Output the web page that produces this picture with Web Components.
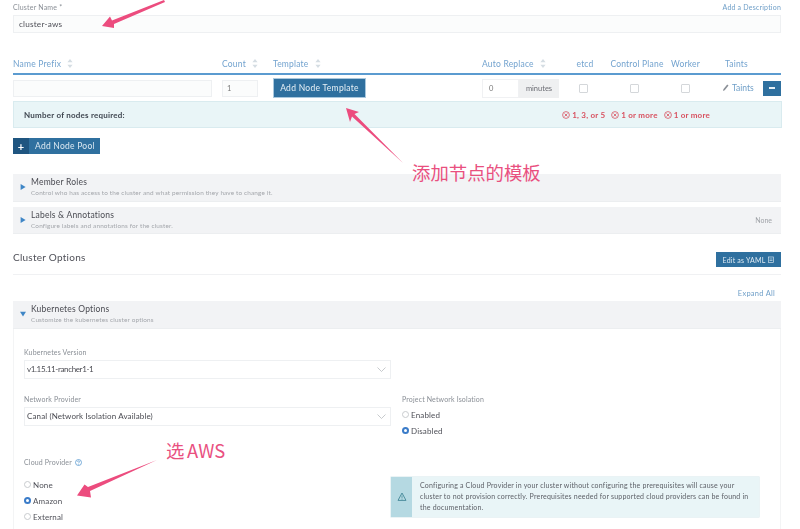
<!DOCTYPE html>
<html lang="en">
<head>
<meta charset="utf-8">
<title>Add Cluster</title>
<style>
    html, body { margin: 0; height: 529px; overflow: hidden; background: #fff; }
    body { font-family: Lato, "Noto Sans CJK SC", sans-serif; color: #4a4b52; position: relative; }
</style>
</head>
<body>
<cluster-page></cluster-page>
<arrow-notes></arrow-notes>

<script>
const sortIcon = `<svg width="6" height="9" viewBox="0 0 6 9" style="margin-left:4px;vertical-align:-1px"><path d="M3 0l2.6 3.2H.4zM3 9L.4 5.8h5.2z" fill="#d5dde3"/></svg>`;

class NameField extends HTMLElement {
    connectedCallback() {
        this.attachShadow({ mode: 'open' }).innerHTML = `
            <style>
                :host { display: block; }
                .top { display: flex; justify-content: space-between; align-items: center; height: 15px; padding-bottom: 1px; font-size: 7px; letter-spacing: .2px; box-sizing: border-box; }
                .top span { color: #8a8f96; }
                .top a { color: #6f9fc8; }
                .box { height: 18px; border: 1px solid #eef0f2; background: #fbfcfc; box-sizing: border-box; padding-left: 5px; display: flex; align-items: center; font-size: 8.2px; color: #4f5058; letter-spacing: .2px; }
            </style>
            <div class="top"><span>Cluster Name *</span><a>Add a Description</a></div>
            <div class="box">cluster-aws</div>`;
    }
}

class NodePool extends HTMLElement {
    connectedCallback() {
        this.attachShadow({ mode: 'open' }).innerHTML = `
            <style>
                :host { display: block; margin-top: 21px; }
                .grid { display: grid; grid-template-columns: 209px 51px 209px 82px 50px 52px 37px 1fr; }
                .head { height: 21px; box-sizing: border-box; border-bottom: 2px solid #5b9bd0; align-items: center; font-size: 8.5px; color: #73a3cf; letter-spacing: .2px; }
                .head div { white-space: nowrap; }
                .c { text-align: center; }
                .row { height: 26px; align-items: center; }
                .input { height: 17px; border: 1px solid #eef0f2; background: #fbfcfc; box-sizing: border-box; font-size: 7.5px; color: #777; padding-left: 4px; display: flex; align-items: center; }
                .add { width: 93px; height: 20px; box-sizing: border-box; border: 1px solid #a9c8de; background: #2f709f; color: #e6f0f6; font-size: 8.5px; letter-spacing: .3px; display: flex; align-items: center; justify-content: center; }
                .auto { display: flex; height: 19px; width: 77px; font-size: 7.5px; }
                .auto b { width: 37px; font-weight: 400; color: #777; padding-left: 6px; box-sizing: border-box; border: 1px solid #f0f1f3; display: flex; align-items: center; }
                .auto i { width: 40px; font-style: normal; color: #6c6d74; background: #eff0f1; display: flex; align-items: center; justify-content: center; }
                .chk { width: 7px; height: 7px; border: 1px solid #d4d7da; border-radius: 1px; margin: auto; }
                .taints { display: flex; justify-content: space-between; align-items: center; padding-left: 19px; font-size: 8.5px; color: #6f9fc8; }
                .taints span { display: flex; align-items: center; gap: 3px; }
                .minus { width: 18px; height: 15px; background: #2f709f; display: flex; align-items: center; justify-content: center; }
                .minus::after { content: ""; width: 6px; height: 1.5px; background: #e8f1f6; }
                .need { display: flex; align-items: center; height: 27px; width: 769px; box-sizing: border-box; border: 1px solid #d9ebef; background: #e9f5f7; padding-left: 10px; font-size: 8px; font-weight: 700; color: #3f4650; letter-spacing: .22px; }
                .need p { margin: 0 0 0 auto; padding-right: 71px; display: flex; gap: 6px; color: #d8505f; }
                .need span { display: flex; align-items: center; gap: 2px; }
                .pool { margin-top: 10px; display: flex; width: fit-content; height: 16px; background: #2f709f; color: #dce9f2; font-size: 8.5px; letter-spacing: .25px; align-items: center; }
                .pool b { width: 16px; height: 100%; background: #1f5580; color: #fff; display: flex; align-items: center; justify-content: center; font-size: 11px; margin-right: 6px; }
                .pool span { padding-right: 5px; }
            </style>
            <div class="grid head">
                <div>Name Prefix ${sortIcon}</div>
                <div>Count ${sortIcon}</div>
                <div>Template ${sortIcon}</div>
                <div>Auto Replace ${sortIcon}</div>
                <div class="c" style="margin-left:-8px">etcd</div>
                <div class="c" style="margin-left:-6px">Control Plane</div>
                <div class="c" style="margin-left:2px">Worker</div>
                <div class="c" style="padding-right:11px">Taints</div>
            </div>
            <div class="grid row">
                <div class="input" style="width:199px"></div>
                <div class="input" style="width:36px">1</div>
                <div class="add">Add Node Template</div>
                <div class="auto"><b>0</b><i>minutes</i></div>
                <div class="chk" style="margin-left:15px"></div>
                <div class="chk" style="margin-left:16px"></div>
                <div class="chk" style="margin-left:15px"></div>
                <div class="taints"><span><svg width="7" height="8" viewBox="0 0 7 8"><path d="M5.2.5l1.3 1.1-3.8 4.6-1.7.9.4-1.9z" fill="#8a8f96"/></svg>Taints</span><div class="minus"></div></div>
            </div>
            <div class="need">Number of nodes required:<p>
                <span><x-cross></x-cross>1, 3, or 5</span>
                <span><x-cross></x-cross>1 or more</span>
                <span><x-cross></x-cross>1 or more</span></p></div>
            <div class="pool"><b>+</b><span>Add Node Pool</span></div>`;
    }
}

class XCross extends HTMLElement {
    connectedCallback() {
        this.attachShadow({ mode: 'open' }).innerHTML = `
            <style>:host { display: inline-flex; }</style>
            <svg width="8" height="8" viewBox="0 0 8 8" fill="none" stroke="#d8505f" stroke-width=".8"><circle cx="4" cy="4" r="3.4"/><path d="M2.5 2.500l3 3M5.500 2.500l-3 3"/></svg>`;
    }
}

class FoldRow extends HTMLElement {
    connectedCallback() {
        const open = this.hasAttribute('open');
        this.attachShadow({ mode: 'open' }).innerHTML = `
            <style>
                :host { display: flex; align-items: center; height: 27.5px; background: #f2f3f5; box-sizing: border-box; padding-right: 9px; border-bottom: 1px solid #eceef0; }
                svg { margin: 0 5px 0 7px; flex: none; }
                .t { font-size: 8.5px; color: #4a4b52; letter-spacing: .2px; line-height: 12px; margin-top: -1px; }
                .s { font-size: 6.4px; color: #a3a6ab; letter-spacing: .16px; line-height: 9px; }
                .r { margin-left: auto; font-size: 7px; color: #a0a3a8; }
            </style>
            <svg width="6" height="6" viewBox="0 0 6 6">${open ? '<path d="M0 .8h6L3 5.6z" fill="#3f86c6"/>' : '<path d="M.6 0L5.6 3 .6 6z" fill="#3f86c6"/>'}</svg>
            <div><div class="t"><slot></slot></div><div class="s">${this.getAttribute('sub')}</div></div>
            <div class="r">${this.getAttribute('side') || ''}</div>`;
    }
}

class SelectBox extends HTMLElement {
    connectedCallback() {
        this.attachShadow({ mode: 'open' }).innerHTML = `
            <style>
                :host { display: block; width: 367px; }
                label { display: block; font-size: 7px; color: #8a8f96; letter-spacing: .15px; height: 13px; padding-top: 1px; box-sizing: border-box; }
                .box { height: 19px; box-sizing: border-box; border: 1px solid #eef0f2; display: flex; align-items: center; justify-content: space-between; padding: 0 4px 0 2px; font-size: 8px; color: #4a4b52; letter-spacing: .12px; }
            </style>
            <label>${this.getAttribute('label')}</label>
            <div class="box"><span><slot></slot></span><svg width="9" height="5" viewBox="0 0 9 5" fill="none" stroke="#b9bcc0" stroke-width=".8"><path d="M.5.500l4 4 4-4"/></svg></div>`;
    }
}

class RadioOption extends HTMLElement {
    connectedCallback() {
        this.attachShadow({ mode: 'open' }).innerHTML = `
            <style>
                :host { display: flex; align-items: center; gap: 2px; height: 16px; font-size: 8px; color: #4f5058; letter-spacing: .15px; }
                i { width: 7px; height: 7px; box-sizing: border-box; border-radius: 50%; border: 1px solid #c7cacd; flex: none; }
                :host([on]) i { border: 0; background: #3b7cc9; display: flex; align-items: center; justify-content: center; }
                :host([on]) i::after { content: ""; width: 3px; height: 3px; border-radius: 50%; background: #fff; }
            </style>
            <i></i><slot></slot>`;
    }
}

class NoteAlert extends HTMLElement {
    connectedCallback() {
        this.attachShadow({ mode: 'open' }).innerHTML = `
            <style>
                :host { display: flex; width: 368px; height: 40px; background: #e9f5f7; box-shadow: 0 0 0 .5px #d5e8ec; }
                .i { width: 21px; background: #b5d9e2; display: flex; align-items: center; justify-content: center; flex: none; }
                p { margin: 0; padding: 0 8px; align-self: center; font-size: 7px; line-height: 11px; color: #5e6168; letter-spacing: .19px; }
            </style>
            <div class="i"><svg width="10" height="9" viewBox="0 0 10 9" fill="none" stroke="#4e8f9e"><path d="M5 1l4 7.400H1z"/><path d="M5 3.500v2.600M5 6.600v1" stroke-width=".8"/></svg></div>
            <p><slot></slot></p>`;
    }
}

class ClusterPage extends HTMLElement {
    connectedCallback() {
        this.attachShadow({ mode: 'open' }).innerHTML = `
            <style>
                :host { display: block; padding: 0 19px 0 13px; filter: blur(.25px); }
                .folds { margin-top: 20px; display: flex; flex-direction: column; gap: 5px; }
                .opts { display: flex; justify-content: space-between; align-items: center; height: 41px; border-bottom: 1px solid #f0f1f3; font-size: 10px; color: #4f5058; letter-spacing: .25px; padding-top: 5px; box-sizing: border-box; }
                .yaml { width: 65px; height: 15px; margin-top: 6px; background: #2f709f; color: #dfeaf2; font-size: 7px; letter-spacing: .2px; display: flex; align-items: center; justify-content: center; gap: 3px; }
                .expand { text-align: right; padding-right: 6px; height: 26px; line-height: 37px; font-size: 7.5px; color: #6f9fc8; letter-spacing: .25px; }
                .panel { border: 1px solid #f3f4f5; border-top: 0; height: 215px; padding: 18px 10px 0; box-sizing: border-box; }
                .split { display: flex; gap: 11px; margin-top: 15px; }
                .cap { font-size: 7px; color: #8a8f96; letter-spacing: .15px; height: 13px; padding-top: 1px; box-sizing: border-box; }
                .cloud { display: flex; margin-top: 18px; }
                .cloud .left { width: 367px; }
                .cloud .left .cap { display: flex; align-items: center; gap: 3px; margin-top: -1px; margin-bottom: 8px; padding-top: 0; }
                .cloud note-alert { margin-top: 20px; }
                .ver { letter-spacing: -.35px; }
            </style>
            <name-field></name-field>
            <node-pool></node-pool>
            <div class="folds">
                <fold-row sub="Control who has access to the cluster and what permission they have to change it.">Member Roles</fold-row>
                <fold-row sub="Configure labels and annotations for the cluster." side="None">Labels &amp; Annotations</fold-row>
            </div>
            <div class="opts"><span>Cluster Options</span>
                <div class="yaml">Edit as YAML <svg width="6" height="7" viewBox="0 0 6 7" fill="none" stroke="#cfe0ec" stroke-width=".7"><rect x=".5" y="1" width="5" height="5.500"/><path d="M1.500 3h3M1.500 4.500h3"/></svg></div>
            </div>
            <div class="expand">Expand All</div>
            <fold-row open sub="Customize the kubernetes cluster options">Kubernetes Options</fold-row>
            <div class="panel">
                <select-box label="Kubernetes Version"><span class="ver">v1.15.11-rancher1-1</span></select-box>
                <div class="split">
                    <select-box label="Network Provider">Canal (Network Isolation Available)</select-box>
                    <div>
                        <div class="cap">Project Network Isolation</div>
                        <radio-option>Enabled</radio-option>
                        <radio-option on>Disabled</radio-option>
                    </div>
                </div>
                <div class="cloud">
                    <div class="left">
                        <div class="cap">Cloud Provider <svg width="7" height="7" viewBox="0 0 7 7" fill="none" stroke="#5a9bd0" stroke-width=".8"><circle cx="3.500" cy="3.500" r="3"/><path d="M2.500 2.800c0-1.200 2-1.200 2 0 0 .7-1 .7-1 1.500M3.500 5v.6"/></svg></div>
                        <radio-option>None</radio-option>
                        <radio-option on>Amazon</radio-option>
                        <radio-option>External</radio-option>
                    </div>
                    <note-alert>Configuring a Cloud Provider in your cluster without configuring the prerequisites will cause your cluster to not provision correctly. Prerequisites needed for supported cloud providers can be found in the documentation.</note-alert>
                </div>
            </div>`;
    }
}

// annotations drawn on top of the screenshot
class ArrowNotes extends HTMLElement {
    connectedCallback() {
        this.attachShadow({ mode: 'open' }).innerHTML = `
            <style>
                :host { position: absolute; left: 0; top: 0; width: 800px; height: 529px; pointer-events: none; }
                svg { position: absolute; left: 0; top: 0; }
                p { position: absolute; margin: 0; color: #e9507f; font: 18.4px/22px "Noto Sans CJK SC", sans-serif; white-space: nowrap; }
            </style>
            <svg width="800" height="529" fill="#ec4c7e">
                <path d="M165 2L114 24 114 28 102 26 110 16.500 112 20.500 164 0z"/>
                <path d="M403 163L352 116.500 350 122 346 108 359 112 354.500 114z"/>
                <path d="M157 460L90 491 91 497.500 77 495.500 84.500 484.500 88 487z"/>
            </svg>
            <p style="left:412px;top:161px">添加节点的模板</p>
            <p style="left:166px;top:439px;word-spacing:-1.5px">选 AWS</p>`;
    }
}

customElements.define('x-cross', XCross);
customElements.define('name-field', NameField);
customElements.define('node-pool', NodePool);
customElements.define('fold-row', FoldRow);
customElements.define('select-box', SelectBox);
customElements.define('radio-option', RadioOption);
customElements.define('note-alert', NoteAlert);
customElements.define('cluster-page', ClusterPage);
customElements.define('arrow-notes', ArrowNotes);
</script>
</body>
</html>
